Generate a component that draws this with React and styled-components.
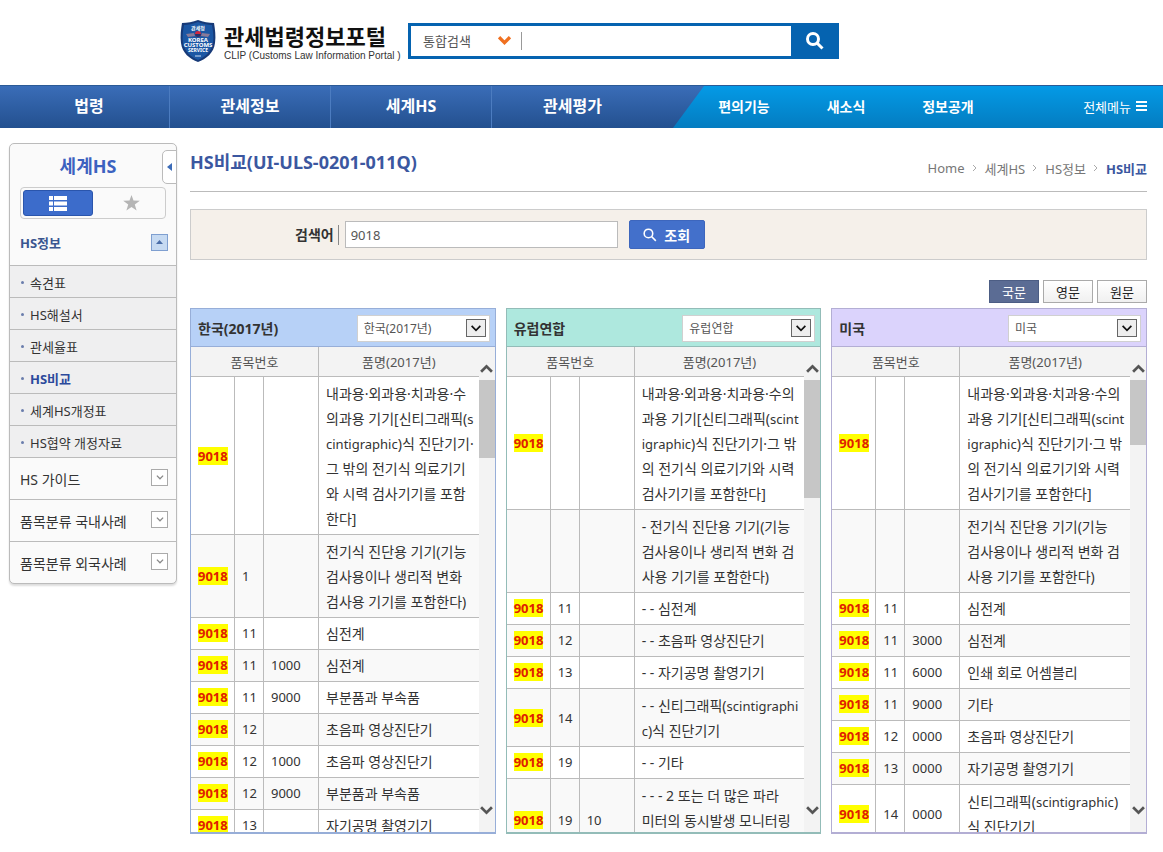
import React, { useState } from 'react';
import styled, { createGlobalStyle } from 'styled-components';

const GlobalStyle = createGlobalStyle`
  * {
    box-sizing: border-box;
  }
  body {
    margin: 0;
    background: #fff;
    color: #333;
    font-family: 'Noto Sans', 'Noto Sans CJK KR', sans-serif;
    font-size: 13px;
  }
  button, input, select {
    font-family: inherit;
    font-size: inherit;
    color: inherit;
  }
  button {
    padding: 0;
    cursor: pointer;
  }
  a {
    color: inherit;
    text-decoration: none;
  }
  ul, ol {
    margin: 0;
    padding: 0;
    list-style: none;
  }
`;

/* header */

const Header = styled.header`
  display: flex;
  align-items: flex-start;
  height: 85px;
  padding: 19px 16px 0 180px;
`;

const Logo = styled.a`
  display: flex;
  gap: 8px;
  width: 228px;
  color: #111;
  svg {
    flex: none;
  }
`;

const LogoText = styled.span`
  display: flex;
  flex-direction: column;
  padding-top: 1px;
  white-space: nowrap;
`;

const LogoTitle = styled.strong`
  font-family: 'Noto Sans CJK KR', sans-serif;
  font-size: 22px;
  line-height: 30px;
`;

const LogoSub = styled.span`
  font-family: 'Liberation Sans', sans-serif;
  font-size: 10px;
  line-height: 12px;
  color: #333;
`;

const TotalSearch = styled.form`
  display: flex;
  align-items: center;
  width: 431px;
  height: 36px;
  margin-top: 4px;
  border: 3px solid #0563b0;
  border-right: 0;
`;

const TotalSelect = styled.div`
  position: relative;
  width: 111px;
  border-right: 1px solid #999;
  select {
    width: 100%;
    height: 16px;
    padding: 0 0 0 12px;
    border: 0;
    background: transparent;
    appearance: none;
    line-height: 16px;
    color: #555;
  }
  svg {
    position: absolute;
    top: 4px;
    right: 10px;
    pointer-events: none;
  }
`;

const TotalInput = styled.input`
  flex: 1;
  min-width: 0;
  height: 30px;
  padding: 0 8px;
  border: 0;
  outline: 0;
`;

const TotalButton = styled.button`
  display: flex;
  align-items: center;
  justify-content: center;
  width: 48px;
  height: 36px;
  border: 0;
  background: #0563b0;
`;

/* gnb */

const Gnb = styled.nav`
  display: flex;
  height: 43px;
  padding-left: 9px;
  border-top: 1px solid #2b5a96;
  background: linear-gradient(#3a6db8, #23508f);
  color: #fff;
`;

const GnbList = styled.ul`
  display: flex;
`;

const GnbItem = styled.li`
  width: 161px;
  border-right: 1px solid #4c7cc0;
  &:last-child {
    border-right: 0;
  }
`;

const GnbAnchor = styled.a`
  display: flex;
  align-items: center;
  justify-content: center;
  height: 38px;
  font-size: 16px;
  font-weight: bold;
`;

const Util = styled.div`
  display: flex;
  flex: 1;
  align-items: center;
  justify-content: space-between;
  margin-left: 20px;
  padding: 0 16px 2px 20px;
  background: linear-gradient(#049ae6, #047cc0);
  clip-path: polygon(31px 0, 100% 0, 100% 100%, 0 100%);
`;

const UtilList = styled.ul`
  display: flex;
`;

const UtilAnchor = styled.a`
  display: block;
  width: 102px;
  font-size: 14px;
  font-weight: bold;
  text-align: center;
`;

const AllMenu = styled.button`
  display: flex;
  align-items: center;
  gap: 5px;
  border: 0;
  background: transparent;
  color: #fff;
`;

/* left menu */

const Wrap = styled.div`
  display: flex;
  align-items: flex-start;
  gap: 13px;
  padding: 15px 16px 16px 9px;
`;

const Aside = styled.aside`
  position: relative;
  flex: none;
  width: 168px;
  border: 1px solid #bbb;
  border-radius: 5px;
  background: #fafafa;
  box-shadow: 0 2px 2px #ddd;
`;

const AsideTitle = styled.h2`
  margin: 0;
  padding: 2px 10px 0 0;
  font-size: 18px;
  line-height: 41px;
  text-align: center;
  color: #3c62c0;
`;

const FoldButton = styled.button`
  position: absolute;
  top: 6px;
  right: -1px;
  display: flex;
  align-items: center;
  justify-content: center;
  width: 15px;
  height: 34px;
  border: 1px solid #bbb;
  border-radius: 5px 0 0 5px;
  background: #fff;
`;

const ViewTabs = styled.div`
  display: flex;
  height: 32px;
  margin: 0 10px;
  padding: 2px;
  border: 1px solid #ccc;
  border-radius: 4px;
`;

const ViewTab = styled.button`
  display: flex;
  flex: 1;
  align-items: center;
  justify-content: center;
  border: 1px solid ${props => (props.$active ? '#2a55ac' : 'transparent')};
  border-radius: 3px;
  background: ${props => (props.$active ? '#3c6ccb' : 'transparent')};
  svg {
    margin-left: ${props => (props.$active ? 0 : '6px')};
  }
`;

const MenuHead = styled.div`
  display: flex;
  align-items: center;
  justify-content: space-between;
  height: ${props => (props.$open ? '46px' : '41px')};
  padding: 0 8px 0 10px;
  font-size: ${props => (props.$open ? '13px' : '14px')};
  font-weight: ${props => (props.$open ? 'bold' : 'normal')};
  color: ${props => (props.$open ? '#3a5690' : '#333')};
`;

const MenuItem = styled.li`
  & + & {
    border-top: 1px solid #bbb;
  }
`;

const ToggleButton = styled.button`
  display: flex;
  align-items: center;
  justify-content: center;
  width: 17px;
  height: 17px;
  margin-bottom: ${props => (props.$open ? 0 : '2px')};
  border: 1px solid ${props => (props.$open ? '#7f9fd0' : '#aaa')};
  background: ${props => (props.$open ? '#c6daf2' : '#fff')};
`;

const SubItem = styled.li`
  height: 32px;
  border-top: 1px solid #bbb;
  background: #efeff0;
  a {
    display: flex;
    align-items: center;
    gap: 6px;
    height: 33px;
    padding-left: 11px;
    font-weight: ${props => (props.$active ? 'bold' : 'normal')};
    color: ${props => (props.$active ? '#2c4a9c' : '#333')};
  }
  a::before {
    content: '';
    width: 3px;
    height: 3px;
    border-radius: 2px;
    background: #6a7dac;
  }
`;

/* content */

const Content = styled.main`
  flex: 1;
  min-width: 0;
`;

const TitleBar = styled.div`
  display: flex;
  justify-content: space-between;
  height: 49px;
  border-bottom: 1px solid #bbb;
`;

const PageTitle = styled.h1`
  margin: 0;
  font-size: 18px;
  line-height: 38px;
  color: #3b57a0;
`;

const Path = styled.ol`
  display: flex;
  align-items: center;
  gap: 7px;
  height: 50px;
  color: #777;
  li {
    display: flex;
    align-items: center;
    gap: 8px;
  }
  li:last-child {
    font-weight: bold;
    color: #3b57a0;
  }
`;

const SearchForm = styled.form`
  display: flex;
  align-items: center;
  height: 51px;
  margin-top: 17px;
  padding-left: 104px;
  border: 1px solid #ccc;
  background: #f5f0ea;
  label {
    padding-right: 4px;
    border-right: 1px solid #888;
    font-size: 14px;
    font-weight: bold;
    line-height: 20px;
  }
`;

const SearchInput = styled.input`
  width: 273px;
  height: 27px;
  margin: 0 11px 0 6px;
  padding: 0 5px;
  border: 1px solid #bbb;
  background: #fff;
  color: #555;
`;

const SearchButton = styled.button`
  display: flex;
  align-items: center;
  justify-content: center;
  gap: 7px;
  width: 76px;
  height: 29px;
  border: 1px solid #3d66bd;
  border-radius: 2px;
  background: #4370cb;
  font-size: 14px;
  font-weight: bold;
  color: #fff;
`;

const LangTabs = styled.div`
  display: flex;
  justify-content: flex-end;
  gap: 4px;
  margin: 20px 0 5px;
`;

const LangButton = styled.button`
  width: 50px;
  height: 23px;
  border: 1px solid ${props => (props.$active ? '#4c5d84' : '#aaa')};
  background: ${props => (props.$active ? '#5b6c94' : 'linear-gradient(#fff, #f0f0f0)')};
  line-height: 20px;
  color: ${props => (props.$active ? '#fff' : '#222')};
`;

const Panels = styled.div`
  display: grid;
  grid-template-columns: 306fr 316fr 316fr;
  gap: 10px;
`;

const Panel = styled.section`
  min-width: 0;
  border: 1px solid ${props => props.$line};
  border-bottom-width: 2px;
`;

const PanelHead = styled.div`
  display: flex;
  align-items: center;
  justify-content: space-between;
  height: 38px;
  padding: 0 5px 0 7px;
  border-bottom: 1px solid ${props => props.$line};
  background: ${props => props.$bg};
  h3 {
    margin: 0;
    font-size: 14px;
  }
`;

const Country = styled.div`
  position: relative;
  width: 133px;
  height: 27px;
  margin-top: 2px;
  select {
    width: 100%;
    height: 27px;
    padding: 0 6px;
    border: 1px solid #d0d0d0;
    background: #fff;
    appearance: none;
    font-size: 12px;
    color: #555;
  }
`;

const CountryArrow = styled.span`
  position: absolute;
  top: 4px;
  right: 4px;
  display: flex;
  align-items: center;
  justify-content: center;
  width: 20px;
  height: 18px;
  border: 1px solid #666;
  background: #eee;
  pointer-events: none;
`;

const PanelBody = styled.div`
  display: flex;
  height: 485px;
  background: #f3f3f3;
`;

const TableBox = styled.div`
  flex: 1;
  min-width: 0;
  overflow: hidden;
`;

const Table = styled.table`
  width: 100%;
  table-layout: fixed;
  border-collapse: separate;
  border-spacing: 0;
  th {
    height: 30px;
    padding: 0;
    border-bottom: 1px solid #bbb;
    border-right: 1px solid #bbb;
    font-weight: normal;
    color: #555;
  }
  th:last-child, td:last-child {
    border-right: 0;
  }
`;

const Row = styled.tr`
  td {
    padding: ${props => (props.$tall ? '4px' : '3px')} 0 3px 7px;
    border-bottom: 1px solid #bbb;
    border-right: 1px solid #bbb;
    line-height: 25px;
    background: #fff;
  }
  &:nth-child(even) td {
    background: #f9f9f9;
  }
`;

const NameCell = styled.td`
  font-size: 14px;
  white-space: pre;
`;

const English = styled.span`
  font-size: 13px;
  line-height: 1;
`;

const Keyword = styled.mark`
  background: #ff0;
  font-weight: bold;
  color: #e02000;
`;

const ScrollBar = styled.div`
  display: flex;
  flex: none;
  flex-direction: column;
  align-items: center;
  justify-content: space-between;
  width: 16px;
  padding: 17px 0;
`;

const ScrollTrack = styled.div`
  flex: 1;
  width: 100%;
  padding-top: 7px;
`;

const ScrollThumb = styled.div`
  background: #c6c6c6;
`;

const countries = [
  {
    name: '한국(2017년)',
    bg: '#b7d1f7',
    line: '#97aed8',
    thumb: 78,
    rows: [
      ['9018', '', '', '내과용·외과용·치과용·수\n의과용 기기[신티그래픽(s\ncintigraphic)식 진단기기·\n그 밖의 전기식 의료기기\n와 시력 검사기기를 포함\n한다]'],
      ['9018', '1', '', '전기식 진단용 기기(기능\n검사용이나 생리적 변화\n검사용 기기를 포함한다)'],
      ['9018', '11', '', '심전계'],
      ['9018', '11', '1000', '심전계'],
      ['9018', '11', '9000', '부분품과 부속품'],
      ['9018', '12', '', '초음파 영상진단기'],
      ['9018', '12', '1000', '초음파 영상진단기'],
      ['9018', '12', '9000', '부분품과 부속품'],
      ['9018', '13', '', '자기공명 촬영기기'],
    ],
  },
  {
    name: '유럽연합',
    bg: '#aee8de',
    line: '#93bcb8',
    thumb: 118,
    rows: [
      ['9018', '', '', '내과용·외과용·치과용·수의\n과용 기기[신티그래픽(scint\nigraphic)식 진단기기·그 밖\n의 전기식 의료기기와 시력\n검사기기를 포함한다]'],
      ['', '', '', '- 전기식 진단용 기기(기능\n검사용이나 생리적 변화 검\n사용 기기를 포함한다)'],
      ['9018', '11', '', '- - 심전계'],
      ['9018', '12', '', '- - 초음파 영상진단기'],
      ['9018', '13', '', '- - 자기공명 촬영기기'],
      ['9018', '14', '', '- - 신티그래픽(scintigraphi\nc)식 진단기기'],
      ['9018', '19', '', '- - 기타'],
      ['9018', '19', '10', '- - - 2 또는 더 많은 파라\n미터의 동시발생 모니터링\n\u00a0'],
    ],
  },
  {
    name: '미국',
    bg: '#dbd3fc',
    line: '#b3aed4',
    thumb: 65,
    rows: [
      ['9018', '', '', '내과용·외과용·치과용·수의\n과용 기기[신티그래픽(scint\nigraphic)식 진단기기·그 밖\n의 전기식 의료기기와 시력\n검사기기를 포함한다]'],
      ['', '', '', '전기식 진단용 기기(기능\n검사용이나 생리적 변화 검\n사용 기기를 포함한다)'],
      ['9018', '11', '', '심전계'],
      ['9018', '11', '3000', '심전계'],
      ['9018', '11', '6000', '인쇄 회로 어셈블리'],
      ['9018', '11', '9000', '기타'],
      ['9018', '12', '0000', '초음파 영상진단기'],
      ['9018', '13', '0000', '자기공명 촬영기기'],
      ['9018', '14', '0000', '신티그래픽(scintigraphic)\n식 진단기기'],
    ],
  },
];

const gnbMenus = ['법령', '관세정보', '세계HS', '관세평가'];
const utilMenus = ['편의기능', '새소식', '정보공개'];
const subMenus = ['속견표', 'HS해설서', '관세율표', 'HS비교', '세계HS개정표', 'HS협약 개정자료'];
const closedMenus = ['HS 가이드', '품목분류 국내사례', '품목분류 외국사례'];
const langs = ['국문', '영문', '원문'];

const Chevron = ({ width = 12, height = 8, color = '#555', stroke = 2, up }) => (
  <svg width={width} height={height} viewBox="0 0 12 8" fill="none" stroke={color} strokeWidth={stroke}>
    <path d={up ? 'M1 7 L6 2 L11 7' : 'M1 1 L6 6 L11 1'} />
  </svg>
);

const Emblem = () => (
  <svg width="36" height="44" viewBox="0 0 36 44">
    <path d="M18 1 C23 3 29 4 34 4 C35 10 36 17 35 24 C34 34 26 40 18 43 C10 40 2 34 1 24 C0 17 1 10 2 4 C7 4 13 3 18 1 Z" fill="#173a78" />
    <path d="M18 3 C23 5 28 6 32 6 C33 12 34 18 33 24 C32 32 25 38 18 41 C11 38 4 32 3 24 C2 18 3 12 4 6 C8 6 13 5 18 3 Z" fill="#1c57a4" />
    <path d="M6 15 L14 14 L15 17 L8 18 Z M30 15 L22 14 L21 17 L28 18 Z" fill="#8a7a98" />
    <circle cx="18" cy="15" r="3" fill="#d02840" />
    <path d="M15 15 A3 3 0 0 0 21 15 Z" fill="#22356e" />
    <g fill="#fff" textAnchor="middle" fontWeight="bold">
      <text x="18" y="11" fontSize="5">관세청</text>
      <text x="18" y="23" fontSize="6">KOREA</text>
      <text x="18" y="28" fontSize="6">CUSTOMS</text>
      <text x="18" y="33" fontSize="5">SERVICE</text>
    </g>
    <path d="M15 37 H21" stroke="#cfe0f4" />
  </svg>
);

const Magnifier = ({ size, stroke }) => (
  <svg width={size} height={size} viewBox="0 0 18 18" fill="none" stroke="#fff" strokeWidth={stroke}>
    <circle cx="7" cy="7" r="5.5" />
    <path d="M11 11 L16.500 16.500" />
  </svg>
);

const ListIcon = () => (
  <svg width="18" height="15" viewBox="0 0 18 15" fill="#fff">
    <path d="M0 0h4v4h-4z M5 0h13v4h-13z M0 5.500h4v4h-4z M5 5.500h13v4h-13z M0 11h4v4h-4z M5 11h13v4h-13z" />
  </svg>
);

const StarIcon = () => (
  <svg width="17" height="16" viewBox="0 0 17 16" fill="#b5b5b5">
    <path d="M8.500 0 L10.500 5.600 L16.800 5.800 L11.800 9.500 L13.600 15.600 L8.500 12 L3.400 15.600 L5.200 9.500 L0.200 5.800 L6.500 5.600 Z" />
  </svg>
);

const ItemName = ({ name }) => (
  <NameCell>
    {name.split(/([a-z]+)/).map((part, i) => (i % 2 ? <English key={i}>{part}</English> : part))}
  </NameCell>
);

const CountryPanel = ({ country }) => (
  <Panel $line={country.line}>
    <PanelHead $bg={country.bg} $line={country.line}>
      <h3>{country.name}</h3>
      <Country>
        <select aria-label={country.name} defaultValue={country.name}>
          {countries.map((c) => <option key={c.name}>{c.name}</option>)}
        </select>
        <CountryArrow><Chevron color="#111" width={12} height={7} /></CountryArrow>
      </Country>
    </PanelHead>
    <PanelBody>
      <TableBox>
        <Table>
          <colgroup>
            <col width="44" />
            <col width="29" />
            <col width="55" />
            <col />
          </colgroup>
          <thead>
            <tr>
              <th colSpan="3">품목번호</th>
              <th>품명(2017년)</th>
            </tr>
          </thead>
          <tbody>
            {country.rows.map(([code, sub, item, name], i) => (
              <Row key={i} $tall={name.includes('\n')}>
                <td>{code && <Keyword>{code}</Keyword>}</td>
                <td>{sub}</td>
                <td>{item}</td>
                <ItemName name={name} />
              </Row>
            ))}
          </tbody>
        </Table>
      </TableBox>
      <ScrollBar>
        <Chevron up stroke={2.5} width={13} height={9} />
        <ScrollTrack>
          <ScrollThumb style={{ height: country.thumb }} />
        </ScrollTrack>
        <Chevron stroke={2.5} width={13} height={9} />
      </ScrollBar>
    </PanelBody>
  </Panel>
);

const App = () => {
  const [keyword, setKeyword] = useState('9018');
  const [lang, setLang] = useState('국문');

  return (
    <>
      <GlobalStyle />
      <Header>
        <Logo href="#">
          <Emblem />
          <LogoText>
            <LogoTitle>관세법령정보포털</LogoTitle>
            <LogoSub>CLIP (Customs Law Information Portal )</LogoSub>
          </LogoText>
        </Logo>
        <TotalSearch onSubmit={(e) => e.preventDefault()}>
          <TotalSelect>
            <select aria-label="통합검색">
              <option>통합검색</option>
            </select>
            <Chevron color="#f07020" stroke={3} width={13} height={9} />
          </TotalSelect>
          <TotalInput aria-label="검색" />
          <TotalButton aria-label="검색"><Magnifier size={18} stroke={3} /></TotalButton>
        </TotalSearch>
      </Header>

      <Gnb>
        <GnbList>
          {gnbMenus.map((menu) => <GnbItem key={menu}><GnbAnchor href="#">{menu}</GnbAnchor></GnbItem>)}
        </GnbList>
        <Util>
          <UtilList>
            {utilMenus.map((menu) => <li key={menu}><UtilAnchor href="#">{menu}</UtilAnchor></li>)}
          </UtilList>
          <AllMenu>
            전체메뉴
            <svg width="11" height="10" viewBox="0 0 11 10" fill="#fff">
              <path d="M0 0h11v2h-11z M0 4h11v2h-11z M0 8h11v2h-11z" />
            </svg>
          </AllMenu>
        </Util>
      </Gnb>

      <Wrap>
        <Aside>
          <AsideTitle>세계HS</AsideTitle>
          <FoldButton aria-label="메뉴 접기">
            <svg width="5" height="8" viewBox="0 0 5 8" fill="#3c6cb8"><path d="M5 0 V8 L0 4 Z" /></svg>
          </FoldButton>
          <ViewTabs>
            <ViewTab $active aria-label="메뉴"><ListIcon /></ViewTab>
            <ViewTab aria-label="즐겨찾기"><StarIcon /></ViewTab>
          </ViewTabs>
          <ul>
            <MenuItem>
              <MenuHead $open>
                <a href="#">HS정보</a>
                <ToggleButton $open aria-label="접기">
                  <svg width="7" height="4" viewBox="0 0 7 4" fill="#4a6da8"><path d="M0 4 H7 L3.500 0 Z" /></svg>
                </ToggleButton>
              </MenuHead>
              <ul>
                {subMenus.map((menu) => <SubItem key={menu} $active={menu === 'HS비교'}><a href="#">{menu}</a></SubItem>)}
              </ul>
            </MenuItem>
            {closedMenus.map((menu) => (
              <MenuItem key={menu}>
                <MenuHead>
                  <a href="#">{menu}</a>
                  <ToggleButton aria-label="펼치기"><Chevron color="#888" width={8} height={5} /></ToggleButton>
                </MenuHead>
              </MenuItem>
            ))}
          </ul>
        </Aside>

        <Content>
          <TitleBar>
            <PageTitle>HS비교(UI-ULS-0201-011Q)</PageTitle>
            <Path>
              {['Home', '세계HS', 'HS정보', 'HS비교'].map((name, i) => (
                <li key={name}>
                  {i > 0 && (
                    <svg width="5" height="8" viewBox="0 0 5 8" fill="none" stroke="#aaa"><path d="M1 1 L4 4 L1 7" /></svg>
                  )}
                  <a href="#">{name}</a>
                </li>
              ))}
            </Path>
          </TitleBar>

          <SearchForm onSubmit={(e) => e.preventDefault()}>
            <label htmlFor="keyword">검색어</label>
            <SearchInput id="keyword" value={keyword} onChange={(e) => setKeyword(e.target.value)} />
            <SearchButton><Magnifier size={14} stroke={2} />조회</SearchButton>
          </SearchForm>

          <LangTabs>
            {langs.map((name) => (
              <LangButton key={name} $active={lang === name} onClick={() => setLang(name)}>{name}</LangButton>
            ))}
          </LangTabs>

          <Panels>
            {countries.map((country) => <CountryPanel key={country.name} country={country} />)}
          </Panels>
        </Content>
      </Wrap>
    </>
  );
};

export default App;
